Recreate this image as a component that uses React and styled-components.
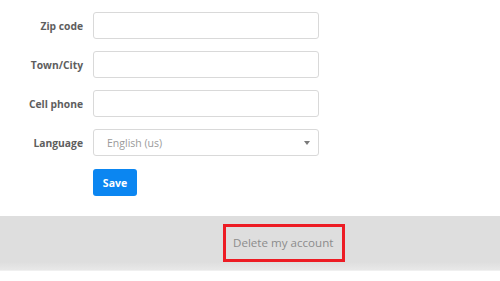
import React from 'react';
import styled, { createGlobalStyle } from 'styled-components';

const GlobalStyle = createGlobalStyle`
  html, body {
    margin: 0;
    padding: 0;
    background: #fff;
    font-family: "Open Sans", "Liberation Sans", sans-serif;
  }
`;

const Page = styled.div`
  width: 500px;
  height: 281px;
  overflow: hidden;
  background: #fff;
`;

const Form = styled.form`
  display: flex;
  flex-direction: column;
  gap: 12px;
  padding: 12px 0 0 0;
`;

const Row = styled.div`
  display: flex;
  align-items: center;
  gap: 10px;
`;

const Label = styled.label`
  width: 83px;
  text-align: right;
  font-size: 10.3px;
  font-weight: 700;
  color: #5e5e5e;
`;

const Input = styled.input`
  box-sizing: border-box;
  width: 226px;
  height: 27px;
  border: 1px solid #d9d9d9;
  border-radius: 3px;
  background: #fff;
  outline: none;
`;

const SelectBox = styled.div`
  position: relative;
  box-sizing: border-box;
  width: 226px;
  height: 27px;
  border: 1px solid #d9d9d9;
  border-radius: 3px;
  display: flex;
  align-items: center;
  padding-left: 13px;
  font-size: 10.5px;
  color: #9a9a9a;
`;

const Arrow = styled.span`
  position: absolute;
  right: 8px;
  top: 11px;
  width: 0;
  height: 0;
  border-left: 3px solid transparent;
  border-right: 3px solid transparent;
  border-top: 4px solid #7a7a7a;
`;

const ButtonRow = styled.div`
  padding-left: 93px;
  margin-top: 1px;
`;

const SaveButton = styled.button`
  width: 44px;
  height: 27px;
  border: none;
  border-radius: 3px;
  background: #0b86f1;
  color: #fff;
  font-family: "Open Sans", "Liberation Sans", sans-serif;
  font-size: 10.5px;
  font-weight: 700;
  padding: 0;
`;

const Band = styled.div`
  margin-top: 20px;
  height: 55px;
  background: linear-gradient(to bottom, #dedede 0%, #dedede 85%, #e8e8e8 100%);
  display: flex;
  align-items: center;
  padding-left: 223px;
  box-sizing: border-box;
  border-bottom: 1px solid #f0f0f0;
`;

const DeleteBox = styled.div`
  box-sizing: border-box;
  width: 122px;
  height: 38px;
  border: 3px solid #ed1c24;
  display: flex;
  align-items: center;
  padding-left: 7px;
  padding-bottom: 2px;
  font-size: 11.6px;
  color: #8c8c8c;
`;

export default function App() {
  return (
    <Page>
      <GlobalStyle />
      <Form>
        <Row>
          <Label>Zip code</Label>
          <Input />
        </Row>
        <Row>
          <Label>Town/City</Label>
          <Input />
        </Row>
        <Row>
          <Label>Cell phone</Label>
          <Input />
        </Row>
        <Row>
          <Label>Language</Label>
          <SelectBox>
            English (us)
            <Arrow />
          </SelectBox>
        </Row>
        <ButtonRow>
          <SaveButton type="button">Save</SaveButton>
        </ButtonRow>
      </Form>
      <Band>
        <DeleteBox>Delete my account</DeleteBox>
      </Band>
    </Page>
  );
}
